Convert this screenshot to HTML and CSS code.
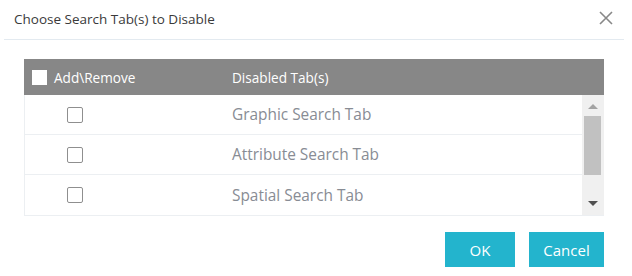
FILE: index.html
```html
<!DOCTYPE html>
<html lang="en">

<head>
  <meta charset="UTF-8">
  <meta name="viewport" content="width=device-width, initial-scale=1.0">
  <title>Choose Search Tab(s) to Disable</title>
  <link rel="stylesheet" href="styles.css">
</head>

<body>
  <div class="dialog">
    <div class="dialog__header">
      <h3 class="dialog__title">Choose Search Tab(s) to Disable</h3>
      <button class="dialog__close" type="button" aria-label="Close">
        <svg width="14" height="14" viewBox="0 0 14 14">
          <path d="M1 1 L13 13 M13 1 L1 13" stroke="#888" stroke-width="1.6" fill="none" />
        </svg>
      </button>
    </div>

    <div class="dialog__body">
      <div class="tabs">
        <div class="tabs__head">
          <label class="tabs__all"><span class="check check--white"></span>Add\Remove</label>
          <span class="tabs__name">Disabled Tab(s)</span>
        </div>

        <div class="tabs__list">
          <div class="tabs__rows">
            <div class="tabs__row">
              <span class="tabs__cell"><span class="check"></span></span>
              <span class="tabs__name">Graphic Search Tab</span>
            </div>
            <div class="tabs__row">
              <span class="tabs__cell"><span class="check"></span></span>
              <span class="tabs__name">Attribute Search Tab</span>
            </div>
            <div class="tabs__row">
              <span class="tabs__cell"><span class="check"></span></span>
              <span class="tabs__name">Spatial Search Tab</span>
            </div>
          </div>

          <div class="scrollbar">
            <span class="scrollbar__up"></span>
            <span class="scrollbar__thumb"></span>
            <span class="scrollbar__down"></span>
          </div>
        </div>
      </div>

      <div class="dialog__actions">
        <button class="btn" type="button">OK</button>
        <button class="btn btn--wide" type="button">Cancel</button>
      </div>
    </div>
  </div>
</body>

</html>
```

FILE: styles.css
```css
* {
  box-sizing: border-box;
}

body {
  margin: 0;
  font-family: "Open Sans", Lato, sans-serif;
  background-color: #fff;
  color: #333;
}

.dialog {
  width: 632px;
  height: 276px;
  background-color: #fff;
}

.dialog__header {
  display: flex;
  align-items: center;
  justify-content: space-between;
  height: 40px;
  margin: 0 8px 0 4px;
  padding: 0 0 1px 10px;
  border-bottom: 1px solid #e3eaf0;
}

.dialog__title {
  margin: 0;
  font-size: 13.5px;
  font-weight: normal;
  color: #3a3a3a;
}

.dialog__close {
  display: flex;
  margin: 0 11px 2px 0;
  padding: 0;
  border: 0;
  background: none;
}

.dialog__body {
  padding: 19px 28px 0 24px;
}

.tabs__head {
  display: flex;
  align-items: center;
  height: 36px;
  background-color: #878787;
  color: #fff;
  font-size: 13.6px;
}

.tabs__all {
  display: flex;
  align-items: center;
  width: 208px;
  padding-left: 8px;
}

.tabs__all .check {
  margin-right: 7px;
}

.tabs__list {
  display: flex;
  border: 1px solid #eceff2;
  border-top: 0;
  border-right: 0;
}

.tabs__rows {
  flex: 1;
}

.tabs__row {
  display: flex;
  align-items: center;
  height: 40px;
  border-bottom: 1px solid #eceff2;
  font-size: 15.4px;
  color: #888c94;
}

.tabs__row:last-child {
  border-bottom: 0;
}

.tabs__cell {
  display: flex;
  width: 207px;
  padding-left: 42px;
}

.check {
  display: inline-block;
  width: 16px;
  height: 16px;
  border: 1px solid #8f8f8f;
  border-radius: 2px;
  background-color: #fff;
}

.check--white {
  width: 15px;
  height: 15px;
  border: 0;
  border-radius: 0;
}

.scrollbar {
  display: flex;
  flex-direction: column;
  align-items: center;
  width: 22px;
  padding: 9px 3px 9px 2px;
  background-color: #f0f0f0;
}

.scrollbar__up {
  width: 0;
  height: 0;
  border-left: 5px solid transparent;
  border-right: 5px solid transparent;
  border-bottom: 5px solid #a3a3a3;
}

.scrollbar__thumb {
  width: 17px;
  height: 59px;
  margin: 7px 0 auto;
  background-color: #c1c1c1;
}

.scrollbar__down {
  width: 0;
  height: 0;
  border-left: 5px solid transparent;
  border-right: 5px solid transparent;
  border-top: 5px solid #505050;
}

.dialog__actions {
  display: flex;
  justify-content: flex-end;
  gap: 14px;
  padding-top: 16px;
}

.btn {
  width: 70px;
  height: 35px;
  padding: 0;
  border: 0;
  background-color: #23b4cd;
  color: #fff;
  font-family: "Open Sans", Lato, sans-serif;
  font-size: 15px;
}

.btn--wide {
  width: 75px;
}
```
